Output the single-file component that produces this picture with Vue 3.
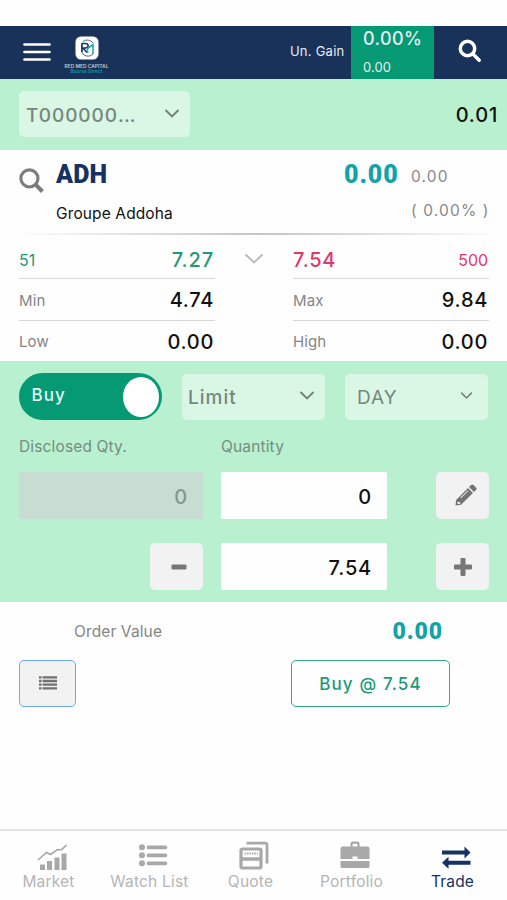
<script setup>
const quotes = [
  { left: 'Min', leftValue: '4.74', right: 'Max', rightValue: '9.84' },
  { left: 'Low', leftValue: '0.00', right: 'High', rightValue: '0.00' },
]
</script>

<template>
  <div class="screen">
    <header class="topbar">
      <svg class="menu" viewBox="0 0 28 20"><path d="M1.500 2.500h25M1.500 10h25M1.500 17.500h25" /></svg>
      <div class="brand">
        <svg class="logo" viewBox="0 0 24 24">
          <rect x=".5" y=".5" width="23" height="23" rx="5.500" fill="#fff" />
          <path d="M8 5.500C11 3 16 4 18 7M6.500 9v5c0 3 2 5.500 5 6 3 .5 5-.5 6.500-2" fill="none" stroke="#4b6385" stroke-width="1" />
          <path d="M7 16V7.500h3.500c3.500 0 3.500 4.500 0 4.500H8l4 4.500" fill="none" stroke="#1c3763" stroke-width="1.600" />
          <path d="M12 13l2-1.500 4-3V18M12.500 12v5" fill="none" stroke="#20a9b0" stroke-width="1.600" />
        </svg>
        <span class="brand-name">RED MED CAPITAL</span>
        <span class="brand-sub">Bourse Direct</span>
      </div>
      <span class="gain-label">Un. Gain</span>
      <div class="gain"><span class="gain-percent">0.00%</span><span class="gain-value">0.00</span></div>
      <svg class="search" viewBox="0 0 24 24"><circle cx="9.500" cy="9.500" r="7.200" /><path d="M15 15l6.200 6.200" /></svg>
    </header>

    <section class="account">
      <div class="select account-select"><span>T000000<span class="dots">...</span></span><svg class="chevron" viewBox="0 0 16 10"><path d="M2 1.500L8 7.500l6-6" /></svg></div>
      <span class="balance">0.01</span>
    </section>

    <section class="symbol">
      <svg class="search symbol-search" viewBox="0 0 24 24"><circle cx="10" cy="10" r="8.200" /><path class="handle" d="M15.500 15.500l7 7" /></svg>
      <div class="symbol-name"><strong>ADH</strong><span>Groupe Addoha</span></div>
      <strong class="last">0.00</strong>
      <div class="change"><span>0.00</span><span class="change-percent">( 0.00% )</span></div>
    </section>
    <div class="fade"></div>

    <section class="quotes">
      <div class="cell first bid"><span class="small">51</span><span class="num">7.27</span></div>
      <svg class="chevron depth" viewBox="0 0 18 10"><path d="M1 1l8 7.500L17 1" /></svg>
      <div class="cell first ask"><span class="num">7.54</span><span class="small">500</span></div>
      <template v-for="q in quotes" :key="q.left">
        <div class="cell"><span class="label">{{ q.left }}</span><span class="num">{{ q.leftValue }}</span></div>
        <span></span>
        <div class="cell"><span class="label">{{ q.right }}</span><span class="num">{{ q.rightValue }}</span></div>
      </template>
    </section>

    <section class="order">
      <div class="options">
        <div class="toggle"><span>Buy</span><i></i></div>
        <div class="select limit"><span>Limit</span><svg class="chevron" viewBox="0 0 16 10"><path d="M2 1.500L8 7.500l6-6" /></svg></div>
        <div class="select day"><span>DAY</span><svg class="chevron" viewBox="0 0 16 10"><path d="M2 1.500L8 7.500l6-6" /></svg></div>
      </div>
      <div class="labels"><span>Disclosed Qty.</span><span>Quantity</span></div>
      <div class="inputs">
        <div class="field disabled">0</div>
        <div class="field">0</div>
        <button class="square edit" type="button">
          <svg viewBox="0 0 22 22"><path fill="#747474" fill-rule="evenodd" d="M13 4l5 5L6 20.800l-5.500.7.600-5.500zM2.600 17.500l-.2 2 .9.600 2-.3-.2-1.500-1.500-.2zM12.800 6.200L5.400 13.600l.6.600 7.400-7.400z" /><path fill="#747474" d="M14 3L16 1c.8-.8 1.700-.8 2.500 0L21 3.500c.8.800.8 1.700 0 2.500l-2 2z" /></svg>
        </button>
      </div>
      <div class="inputs price">
        <button class="square minus" type="button"><svg viewBox="0 0 20 20"><rect x="2.500" y="7.500" width="15" height="5" rx="1" /></svg></button>
        <div class="field">7.54</div>
        <button class="square" type="button"><svg viewBox="0 0 20 20"><rect x="1" y="7.500" width="18" height="5" rx="1" /><rect x="7.500" y="1" width="5" height="18" rx="1" /></svg></button>
      </div>
    </section>

    <section class="summary">
      <span class="order-label">Order Value</span><strong>0.00</strong>
    </section>
    <section class="actions">
      <button class="list" type="button">
        <svg viewBox="0 0 18 14"><path d="M0 1.300h2.600M0 5h2.600M0 8.700h2.600M0 12.400h2.600M3.600 1.300H18M3.600 5H18M3.600 8.700H18M3.600 12.400H18" /></svg>
      </button>
      <button class="buy" type="button">Buy @ 7.54</button>
    </section>

    <nav class="tabs">
      <div class="tab">
        <svg viewBox="0 0 30 30"><path d="M3 24.500h5V30H3zM10 21h5v9h-5zM17.500 17.500h5V30h-5zM24.500 13.500h5V30h-5z" fill="currentColor" /><path d="M1 20L9.500 12.500l4 2 7-5 4 .2 5-4.700" fill="none" stroke="currentColor" stroke-width="1.600" /></svg>
        <span>Market</span>
      </div>
      <div class="tab">
        <svg viewBox="0 0 30 30"><g fill="currentColor"><circle cx="4" cy="7.300" r="3" /><circle cx="4" cy="15.300" r="3" /><circle cx="4" cy="23.300" r="3" /></g><path d="M10.500 7.300h17M10.500 15.300h17M10.500 23.300h17" stroke="currentColor" stroke-width="3.700" stroke-linecap="round" /></svg>
        <span>Watch List</span>
      </div>
      <div class="tab">
        <svg viewBox="0 0 30 30"><path d="M7.500 3.200H26.500a1.500 1.500 0 0 1 1.500 1.500V23.500" fill="none" stroke="currentColor" stroke-width="2.800" /><rect x="2" y="9" width="20" height="19" rx="1.500" fill="none" stroke="currentColor" stroke-width="3.200" /><path d="M2 19h20" stroke="currentColor" stroke-width="3.500" /><path d="M5.500 13.500h13.500" stroke="currentColor" stroke-width="2" stroke-dasharray="1.500 1" /></svg>
        <span>Quote</span>
      </div>
      <div class="tab">
        <svg viewBox="0 0 30 30"><path d="M11.500 8V4A1.500 1.500 0 0 1 13 2.700h4A1.500 1.500 0 0 1 18.500 4v4" fill="none" stroke="currentColor" stroke-width="2.200" /><path d="M2.500 6.500h25a2 2 0 0 1 2 2V19h-12v-2.500h-5V19h-12V8.500a2 2 0 0 1 2-2zM.5 21h29v5.500a1.500 1.500 0 0 1-1.500 1.500H2a1.500 1.500 0 0 1-1.500-1.500z" fill="currentColor" /></svg>
        <span>Portfolio</span>
      </div>
      <div class="tab active">
        <svg viewBox="0 0 30 30"><path d="M1 10.500h22.500V6.500l6 6-6 6v-4H1zM29.500 20.800H7.500v-4L1 22.800l6.500 6v-4h22z" fill="currentColor" /></svg>
        <span>Trade</span>
      </div>
    </nav>
  </div>
</template>

<style>
body { background: #fefefe; }
</style>

<style scoped>
* { box-sizing: border-box; }
.screen { width: 507px; height: 900px; padding-top: 25.500px; display: flex; flex-direction: column; background: #fefefe; color: #111; font-family: Inter, "Liberation Sans", sans-serif; overflow: hidden; white-space: nowrap; }
svg { display: block; flex: none; }
button { font: inherit; padding: 0; border: 0; }
.topbar { height: 53.500px; display: flex; align-items: center; background: #183259; color: #e5edf5; }
.menu { width: 28px; height: 20px; margin-left: 23px; fill: none; stroke: #fff; stroke-width: 2.700; stroke-linecap: round; }
.brand { width: 46px; margin: 6px 0 0 12.500px; display: flex; flex-direction: column; align-items: center; align-self: stretch; padding-top: 4px; }
.logo { width: 24px; height: 24px; margin-left: 1px; }
.brand-name { margin-top: 4px; font-size: 4.900px; line-height: 5px; font-weight: 600; color: #bdc6d3; }
.brand-sub { font-size: 4.500px; line-height: 5px; color: #159da8; font-weight: 600; letter-spacing: .2px; }
.gain-label { margin-left: auto; font-size: 13px; letter-spacing: .25px; margin-top: -2px; }
.gain { width: 82.500px; height: 100%; margin-left: 6.500px; padding-left: 12px; background: #059974; display: flex; flex-direction: column; }
.gain-percent { font-size: 18px; line-height: 25px; letter-spacing: .4px; font-weight: 500; }
.gain-value { font-size: 13px; line-height: 20px; margin-top: 6px; letter-spacing: .05px; }
.search { width: 24px; height: 24px; margin: 0 25px 2px 24.500px; fill: none; stroke: #fff; stroke-width: 3.500; stroke-linecap: round; }
.account { height: 71px; padding: 0 9px 0 19px; display: flex; align-items: center; justify-content: space-between; background: #b9f0d0; }
.select { height: 46px; border-radius: 5px; background: #daf6e5; color: #76877e; display: flex; align-items: center; justify-content: space-between; font-size: 19px; letter-spacing: 1px; }
.chevron { width: 16px; height: 10px; fill: none; stroke: #728078; stroke-width: 1.900; stroke-linecap: round; }
.account-select { width: 171px; padding: 0 10px 0 7px; font-weight: 500; margin-bottom: 1px; padding-top: 2px; letter-spacing: .950px; }
.dots { letter-spacing: .1px; }
.account-select .chevron { margin-bottom: 3px; }
.balance { font-size: 20px; letter-spacing: .8px; font-weight: 500; padding-top: 1px; }
.symbol { height: 83px; display: flex; align-items: flex-start; padding-left: 19px; }
.symbol-search { width: 25px; height: 25px; margin: 18px 12px 0 0; stroke: #7c7c7c; stroke-width: 3; stroke-linecap: butt; }
.handle { stroke-width: 4; }
.symbol-name { width: 288px; display: flex; flex-direction: column; }
.symbol-name strong { font-family: Roboto, sans-serif; color: #153263; font-size: 25px; line-height: 30px; font-weight: 900; margin-top: 10px; letter-spacing: .1px; }
.symbol-name span { font-size: 15.500px; line-height: 20px; margin-top: 14px; letter-spacing: .12px; }
.last, .summary strong { font-family: Roboto, sans-serif; color: #10a4aa; font-size: 25px; line-height: 30px; font-weight: 900; letter-spacing: .9px; }
.last { margin-top: 10px; width: 67px; }
.change { color: #888; display: flex; flex-direction: column; font-size: 15.500px; line-height: 20px; margin-top: 17px; letter-spacing: 1.150px; }
.change-percent { margin-top: 14px; }
.fade { height: 2px; margin: 0 5px 0 15px; background: linear-gradient(90deg, #fefefe, #c4c4c4 50%, #fefefe); }
.quotes { height: 126px; padding: 0 18px 0 19px; display: grid; grid-template: 44px 41.500px 40.500px / 196px 78px 196px; }
.cell { display: flex; justify-content: space-between; align-items: center; border-bottom: 1.500px solid #d7d7d7; padding-top: 2px; }
.cell:nth-last-child(-n+3) { border-bottom-color: transparent; padding-top: 3px; }
.num { font-size: 20px; font-weight: 500; letter-spacing: .7px; padding-right: 1px; }
.bid .num { letter-spacing: .9px; }
.first { padding-top: 6px; }
.bid { color: #1a9b76; }
.ask { color: #df386b; }
.small { font-size: 16px; letter-spacing: -.05px; padding-right: 1px; }
.label { color: #858585; font-size: 15px; letter-spacing: .1px; }
.depth { width: 18px; height: 10px; margin: 19px auto 0; stroke: #bbb; }
.order { height: 241px; padding: 12px 18px 0 19px; background: #b9f0d0; }
.options { display: grid; grid-template-columns: 143px 143px 143px; column-gap: 20px; height: 47px; }
.toggle { height: 47px; border-radius: 24px; background: #059974; display: flex; align-items: center; justify-content: space-between; padding: 0 3px 0 12.500px; color: #e4fff4; font-size: 17px; font-weight: 500; letter-spacing: 1.100px; }
.toggle span { margin-bottom: 4px; }
.toggle i { width: 36px; height: 40px; border-radius: 50%; background: #fff; }
.limit { padding: 1px 10px 0 6px; margin-top: 1px; font-weight: 500; }
.day { padding: 1px 15px 0 12px; margin-top: 1px; }
.limit .chevron, .day .chevron { margin-bottom: 3px; }
.day .chevron { width: 13px; }
.labels { display: grid; grid-template-columns: 202px 1fr; margin-top: 17px; height: 20px; color: #748d80; font-size: 15.500px; line-height: 20px; letter-spacing: .15px; }
.inputs { display: grid; grid-template-columns: 184px 166px 53px; column-gap: 18px; justify-content: start; margin-top: 15px; height: 47px; }
.inputs .square:last-child { margin-left: 31px; }
.price { margin-top: 24px; }
.field { height: 47px; border-radius: 2px; background: #fefefe; display: flex; align-items: center; justify-content: flex-end; padding: 2px 15px 0 0; font-size: 20px; font-weight: 500; letter-spacing: .8px; }
.disabled { background: #c9dcd1; color: #83978b; }
.square { width: 53px; height: 47px; border-radius: 5px; background: #f2f2f2; display: grid; place-items: center; }
.square svg { width: 20px; height: 20px; fill: #777; margin-top: 1px; }
.square.edit svg { width: 22px; height: 22px; margin: 0 0 2px 7px; }
.minus { justify-self: end; }
.square.minus svg { margin-left: 4px; }
.summary { height: 58px; padding: 0 64px 0 74px; display: flex; align-items: center; justify-content: space-between; }
.order-label { color: #858585; font-size: 15.500px; letter-spacing: .12px; padding-top: 1px; }
.summary strong { font-size: 23px; letter-spacing: .9px; padding-top: 1px; }
.actions { display: flex; justify-content: space-between; padding: 0 57px 0 19px; height: 47px; }
.list { width: 57px; height: 47px; border: 1.500px solid #70a6f8; border-radius: 5px; background: #f2f2f2; display: grid; place-items: center; }
.list svg { width: 18px; height: 14px; margin-bottom: 1px; stroke: #707070; stroke-width: 2.300; }
.buy { width: 159px; height: 47px; border: 1.500px solid #35aa87; border-radius: 5px; background: #fefefe; color: #1a9b76; font-size: 17px; font-weight: 500; letter-spacing: 1.150px; padding-top: 1px; }
.tabs { margin-top: auto; height: 71px; border-top: 2px solid #e3e3e3; display: grid; grid-template-columns: repeat(5, 101px); }
.tab { color: #a8a8a8; display: flex; flex-direction: column; align-items: center; padding-top: 9px; }
.tab svg { width: 30px; height: 30px; margin-left: 2px; }
.tab span { color: #b5b5b5; font-size: 15.500px; line-height: 20px; margin-top: 2px; letter-spacing: .2px; margin-left: -4px; }
.tab.active, .tab.active span { color: #153263; }
</style>
